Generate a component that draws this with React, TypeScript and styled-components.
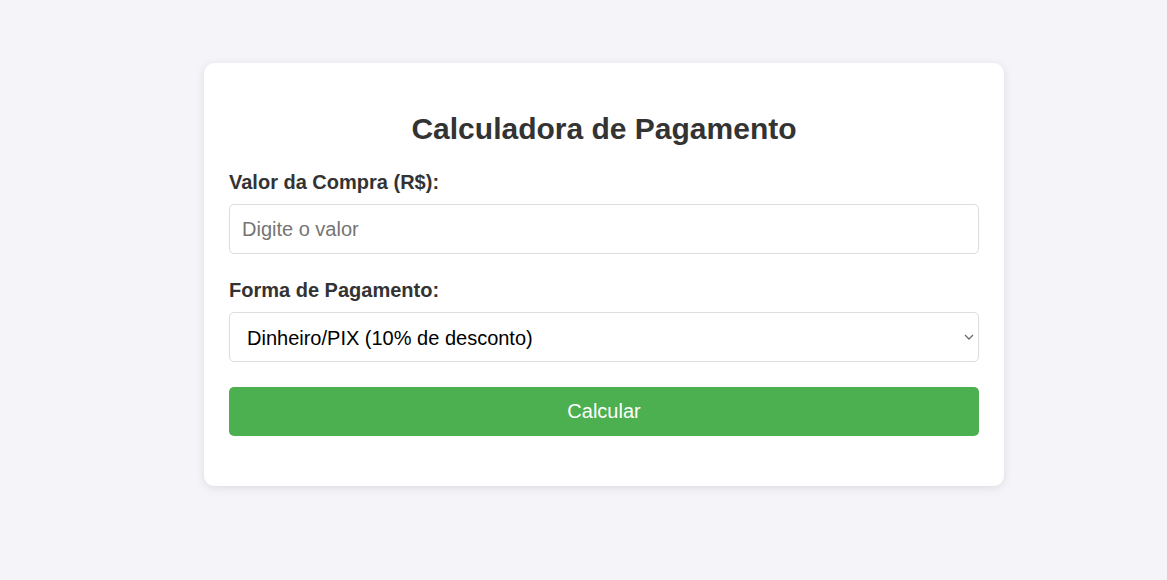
import React from "react";
import styled, { createGlobalStyle } from "styled-components";

const GlobalStyle = createGlobalStyle`
  html, body {
    margin: 0;
    padding: 0;
    background: #f4f4f9;
    font-family: "Liberation Sans", Arial, sans-serif;
  }
  * { box-sizing: border-box; }
`;

const Page = styled.div`
  padding: 63px 0 94px 204px;
`;

const Card = styled.div`
  width: 800px;
  background: #ffffff;
  border-radius: 10px;
  box-shadow: 0 2px 10px rgba(0, 0, 0, 0.1);
  padding: 25px 25px 50px;
`;

const Title = styled.h2`
  margin: 24px 0 25px;
  font-size: 30px;
  line-height: 34px;
  font-weight: bold;
  color: #333333;
  text-align: center;
`;

const Group = styled.div`
  display: flex;
  flex-direction: column;
  margin-bottom: 25px;
`;

const Label = styled.label`
  display: block;
  font-size: 20px;
  line-height: 23px;
  font-weight: bold;
  color: #333333;
  margin-bottom: 10px;
`;

const Input = styled.input`
  width: 100%;
  height: 50px;
  padding: 12px;
  font-family: "Liberation Sans", Arial, sans-serif;
  font-size: 20px;
  line-height: 24px;
  border: 1px solid #dddddd;
  border-radius: 5px;
  color: #000;
  background: #fff;
  outline: none;
  &::placeholder { color: #757575; }
`;

const SelectWrap = styled.div`
  position: relative;
`;

const Select = styled.select`
  appearance: none;
  -webkit-appearance: none;
  width: 100%;
  height: 50px;
  padding: 1px 30px 0 17px;
  font-family: "Liberation Sans", Arial, sans-serif;
  font-size: 20px;
  border: 1px solid #dddddd;
  border-radius: 5px;
  color: #000;
  background: #fff;
  outline: none;
`;

const Chevron = styled.svg`
  position: absolute;
  right: 5px;
  top: 50%;
  width: 10px;
  height: 6px;
  margin-top: -3px;
  pointer-events: none;
`;

const Button = styled.button`
  display: block;
  width: 100%;
  padding: 13px 0;
  font-family: "Liberation Sans", Arial, sans-serif;
  font-size: 20px;
  line-height: 23px;
  color: #ffffff;
  background: #4caf50;
  border: none;
  border-radius: 5px;
  cursor: pointer;
`;

export default function App() {
  return (
    <>
      <GlobalStyle />
      <Page>
        <Card>
          <Title>Calculadora de Pagamento</Title>
          <Group>
            <Label htmlFor="valor">Valor da Compra (R$):</Label>
            <Input id="valor" type="number" placeholder="Digite o valor" />
          </Group>
          <Group>
            <Label htmlFor="forma">Forma de Pagamento:</Label>
            <SelectWrap>
              <Select id="forma" defaultValue="pix">
                <option value="pix">Dinheiro/PIX (10% de desconto)</option>
                <option value="debito">Cartão de Débito (5% de desconto)</option>
                <option value="credito">Cartão de Crédito</option>
              </Select>
              <Chevron viewBox="0 0 10 6" aria-hidden="true">
                <path d="M1 1 L5 5 L9 1" fill="none" stroke="#6b6b6b" strokeWidth="1.3" />
              </Chevron>
            </SelectWrap>
          </Group>
          <Button type="button">Calcular</Button>
        </Card>
      </Page>
    </>
  );
}
